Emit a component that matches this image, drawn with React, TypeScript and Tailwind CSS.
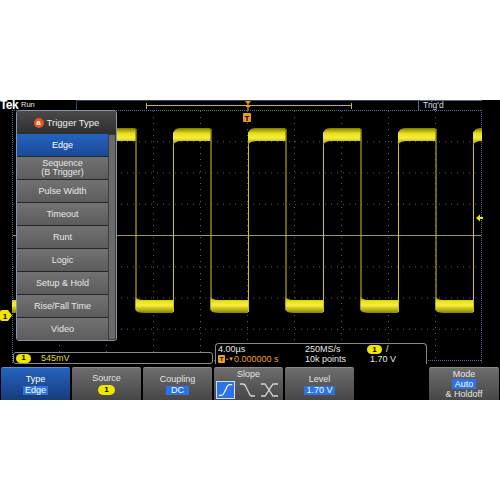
import React from "react";

const Y_HI_T = 18;
const Y_HI_B = 31;
const Y_LO_T = 190;
const Y_LO_B = 203;
const HALF = 37.5;
const rises = [-52, 23, 98, 173, 248, 323, 398, 473];

function highPath(r: number) {
  const f = r + HALF;
  return `M${r} ${Y_HI_T + 6} Q${r + 1} ${Y_HI_T} ${r + 7} ${Y_HI_T} L${f} ${Y_HI_T} L${f} ${Y_HI_B} L${r + 9} ${Y_HI_B} Q${r + 1} ${Y_HI_B} ${r} ${Y_HI_B + 5} Z`;
}
function lowPath(f: number) {
  const r2 = f + HALF;
  return `M${f} ${Y_LO_T - 4} Q${f + 1} ${Y_LO_T} ${f + 8} ${Y_LO_T} L${r2} ${Y_LO_T} L${r2} ${Y_LO_B} L${f + 9} ${Y_LO_B} Q${f + 1} ${Y_LO_B} ${f} ${Y_LO_B - 3} Z`;
}

function Graticule() {
  const vx = [59, 106, 153, 200, 247, 294, 341, 388, 435];
  const hy = [31.25, 62.5, 93.75, 156.25, 187.5, 218.75];
  return (
    <svg className="absolute inset-0" width={500} height={254} viewBox="0 0 500 254">
      <defs>
        <linearGradient id="band" x1="0" y1="0" x2="0" y2="1">
          <stop offset="0" stopColor="#7c7600" />
          <stop offset="0.3" stopColor="#e8df1c" />
          <stop offset="0.55" stopColor="#f6ee3c" />
          <stop offset="1" stopColor="#8a8200" />
        </linearGradient>
        <filter id="soft" x="-5%" y="-5%" width="110%" height="110%">
          <feGaussianBlur stdDeviation="0.5" />
        </filter>
        <clipPath id="gclip">
          <rect x={12} y={0} width={470} height={254} />
        </clipPath>
      </defs>
      {vx.map((x) => (
        <line key={"v" + x} x1={x + 0.5} y1={1} x2={x + 0.5} y2={250} stroke="#5c5c5c" strokeDasharray="1 5" />
      ))}
      {hy.map((y) => (
        <line key={"h" + y} x1={13} y1={y + 0.5} x2={482} y2={y + 0.5} stroke="#5c5c5c" strokeDasharray="1 5" />
      ))}
      <line x1={12.5} y1={0} x2={12.5} y2={254} stroke="#50709a" strokeDasharray="1 1" />
      <line x1={481.5} y1={0} x2={481.5} y2={254} stroke="#50709a" strokeDasharray="1 1" />
      <line x1={12} y1={0.5} x2={482} y2={0.5} stroke="#50709a" strokeDasharray="1 1" />
      <line x1={12} y1={250.5} x2={482} y2={250.5} stroke="#50709a" strokeDasharray="1 1" />
      <line x1={13} y1={125.5} x2={481} y2={125.5} stroke="#a39356" strokeWidth={1} />
      <g clipPath="url(#gclip)">
        {rises.map((r) => (
          <g key={"w" + r}>
            <line x1={r + 0.5} y1={Y_HI_T + 4} x2={r + 0.5} y2={Y_LO_B - 1} stroke="#cfc70e" />
            <line x1={r + HALF + 0.5} y1={Y_HI_T + 1} x2={r + HALF + 0.5} y2={Y_LO_B - 3} stroke="#cfc70e" />
            <g filter="url(#soft)">
              <path d={highPath(r)} fill="url(#band)" />
              <path d={lowPath(r + HALF)} fill="url(#band)" />
            </g>
          </g>
        ))}
      </g>
      <rect x={243} y={3} width={8} height={9} rx={1} fill="#eb9a1c" />
      <text x={247} y={10.5} fontSize={8} fontWeight={700} fill="#000" textAnchor="middle" fontFamily="Liberation Sans, sans-serif">T</text>
      <polygon points="476,108 480,104.5 480,107 483,107 483,109 480,109 480,111.5" fill="#f2e600" />
    </svg>
  );
}

function Pill({ className = "" }: { className?: string }) {
  return (
    <span className={"inline-flex items-center justify-center w-[15px] h-[9px] rounded-full bg-[#f2e600] text-black text-[8px] font-bold leading-none " + className}>
      1
    </span>
  );
}

function Hl({ children, className = "" }: { children: React.ReactNode; className?: string }) {
  return <span className={"bg-[#2d72e6] text-white px-[2px] leading-[9px] " + className}>{children}</span>;
}

function Btn({ children, selected = false, className = "" }: { children: React.ReactNode; selected?: boolean; className?: string }) {
  return (
    <div
      className={
        "w-[69px] h-[33px] rounded-t-[2px] border-t flex flex-col items-center text-[9px] leading-[10px] " +
        (selected
          ? "bg-linear-to-b from-[#2563be] to-[#163c7c] border-[#5d8ad0] text-white "
          : "bg-linear-to-b from-[#6d6d6d] to-[#474747] border-[#8a8a8a] text-[#e4e4e4] ") +
        className
      }
    >
      {children}
    </div>
  );
}

const menuItems = ["Edge", "SEQ", "Pulse Width", "Timeout", "Runt", "Logic", "Setup & Hold", "Rise/Fall Time", "Video"];

function Menu() {
  return (
    <div className="w-[101px] h-[231px] border border-[#8796ab] rounded-[3px] bg-[#2a2a2a] flex flex-col overflow-hidden">
      <div className="h-[23px] shrink-0 bg-linear-to-b from-[#4a4a4a] to-[#2e2e2e] flex items-center justify-center gap-[3px]">
        <span className="w-[10px] h-[10px] rounded-full bg-[#e8531c] text-white text-[8px] font-bold leading-none flex items-center justify-center">a</span>
        <span className="text-[9.5px] text-[#f0f0f0] leading-none">Trigger Type</span>
      </div>
      <div className="flex-1 flex">
        <div className="w-[91px] flex flex-col gap-[1px] bg-[#262626]">
          {menuItems.map((m, i) => (
            <div
              key={m}
              className={
                "h-[22px] shrink-0 flex flex-col items-center justify-center text-[9px] " +
                (i === 0
                  ? "bg-linear-to-b from-[#2663c2] to-[#1a4a96] text-white"
                  : "bg-linear-to-b from-[#727272] to-[#5c5c5c] text-[#e8e8e8]")
              }
            >
              {m === "SEQ" ? (
                <>
                  <span className="leading-[9px]">Sequence</span>
                  <span className="leading-[9px]">(B Trigger)</span>
                </>
              ) : (
                <span className="leading-none">{m}</span>
              )}
            </div>
          ))}
        </div>
        <div className="flex-1 bg-[#3c3c3c] flex px-[1px] py-[1px]">
          <div className="flex-1 bg-[#6a6a6a] rounded-[1px]" />
        </div>
      </div>
    </div>
  );
}

function Readouts() {
  return (
    <div className="h-[23px] flex items-end text-[9px]">
      <div className="ml-[13px] w-[200px] h-[12px] bg-black border border-[#8a8a8a] rounded-[3px] flex items-center pl-[2px] gap-[10px]">
        <Pill />
        <span className="text-[#e6de20] leading-none">545mV</span>
      </div>
      <div className="ml-[2px] w-[212px] h-[21px] bg-black border border-b-0 border-[#8a8a8a] rounded-t-[4px] flex px-[2px] pt-[1px] leading-[9.5px]">
        <div className="w-[87px] flex flex-col">
          <span className="text-[#e8e8e8]">4.00µs</span>
          <span className="flex items-center text-[#eea01e]">
            <span className="w-[7px] h-[8px] bg-[#eea01e] text-black text-[6px] font-bold leading-none flex items-center justify-center rounded-[1px]">T</span>
            <span className="text-[6px] ml-[1px]">•▼</span>
            <span>0.000000 s</span>
          </span>
        </div>
        <div className="w-[62px] flex flex-col text-[#e8e8e8]">
          <span>250MS/s</span>
          <span>10k points</span>
        </div>
        <div className="flex flex-col text-[#e8e8e8]">
          <span className="flex items-center gap-[4px] h-[9.5px]">
            <Pill />
            <span>/</span>
          </span>
          <span className="pl-[3px]">1.70 V</span>
        </div>
      </div>
    </div>
  );
}

function SlopeIcon({ kind }: { kind: "rise" | "fall" | "either" }) {
  const d =
    kind === "rise"
      ? "M2 15 H5 Q7 15 8 12 L11 6 Q12 3 14 3 H17"
      : kind === "fall"
      ? "M2 3 H5 Q7 3 8 6 L11 12 Q12 15 14 15 H17"
      : "M1 3 H5 L13 15 H18 M1 15 H5 L13 3 H18";
  return (
    <svg width={19} height={18} viewBox="0 0 19 18">
      <path d={d} fill="none" stroke={kind === "rise" ? "#ffffff" : "#d4d4d4"} strokeWidth={1.3} />
    </svg>
  );
}

export default function App() {
  return (
    <div className="w-[500px] h-[500px] bg-white flex flex-col font-['Liberation_Sans',Arial,sans-serif]">
      <div className="h-[100px] shrink-0" />
      <div className="h-[300px] shrink-0 bg-black flex flex-col text-white">
        {/* top bar */}
        <div className="h-[10px] shrink-0 flex">
          <div className="w-[76px] flex items-center">
            <span className="text-[12px] font-bold leading-[10px] tracking-[-0.6px]">Tek</span>
            <span className="text-[7.5px] leading-none ml-[3px] text-[#e8e8e8]">Run</span>
          </div>
          <div className="w-[342px] border-l border-t border-[#34465c] relative">
            <svg className="absolute inset-0" width={342} height={10} viewBox="0 0 342 10">
              <line x1={69} y1={4.5} x2={275} y2={4.5} stroke="#c8b630" />
              <line x1={69.5} y1={2} x2={69.5} y2={8} stroke="#c8b630" />
              <line x1={274.5} y1={2} x2={274.5} y2={8} stroke="#c8b630" />
              <polygon points="168,0 174,0 171,3.5" fill="#eb9a1c" />
              <line x1={171} y1={3} x2={171} y2={10} stroke="#eb9a1c" strokeWidth={1.2} />
              <line x1={169} y1={5.5} x2={173} y2={5.5} stroke="#eb9a1c" strokeWidth={1.2} />
            </svg>
          </div>
          <div className="w-[64px] border-l border-t border-[#5a6a80] flex items-center pl-[4px] text-[8.5px] text-[#d3dae2] leading-none">
            Trig'd
          </div>
        </div>
        {/* main */}
        <div className="relative h-[254px] shrink-0">
          <Graticule />
          <div className="absolute left-0 top-[200px]">
            <svg width={12} height={11} viewBox="0 0 12 11">
              <path d="M2 0 H8 L12 5.5 L8 11 H2 Q0 11 0 9 V2 Q0 0 2 0 Z" fill="#f2e600" />
              <text x={5} y={8.5} fontSize={8} fontWeight={700} fill="#000" textAnchor="middle" fontFamily="Liberation Sans, sans-serif">1</text>
            </svg>
          </div>
          <div className="relative flex flex-col h-full">
            <div className="flex-1 pl-[16px]">
              <Menu />
            </div>
            <Readouts />
          </div>
        </div>
        {/* buttons */}
        <div className="h-[36px] shrink-0 pt-[3px] flex gap-[2px] pl-[1px] pr-[1px]">
          <Btn selected className="justify-center gap-[2px]">
            <span>Type</span>
            <Hl>Edge</Hl>
          </Btn>
          <Btn className="justify-center gap-[2px]">
            <span>Source</span>
            <Pill className="w-[17px] h-[10px]" />
          </Btn>
          <Btn className="justify-center gap-[2px]">
            <span>Coupling</span>
            <Hl className="px-[5px]">DC</Hl>
          </Btn>
          <Btn className="pt-[1px]">
            <span>Slope</span>
            <div className="mt-[2px] flex items-center gap-[3px] w-full pl-[2px]">
              <div className="w-[19px] h-[18px] bg-[#2d72e6] border border-[#cfe0ff] flex items-center justify-center">
                <SlopeIcon kind="rise" />
              </div>
              <SlopeIcon kind="fall" />
              <SlopeIcon kind="either" />
            </div>
          </Btn>
          <Btn className="justify-center gap-[2px]">
            <span>Level</span>
            <Hl>1.70 V</Hl>
          </Btn>
          <div className="flex-1" />
          <Btn className="justify-center w-[70px]">
            <span className="leading-[10px]">Mode</span>
            <Hl className="px-[3px] leading-[10px]">Auto</Hl>
            <span className="leading-[11px]">&amp; Holdoff</span>
          </Btn>
        </div>
      </div>
    </div>
  );
}
